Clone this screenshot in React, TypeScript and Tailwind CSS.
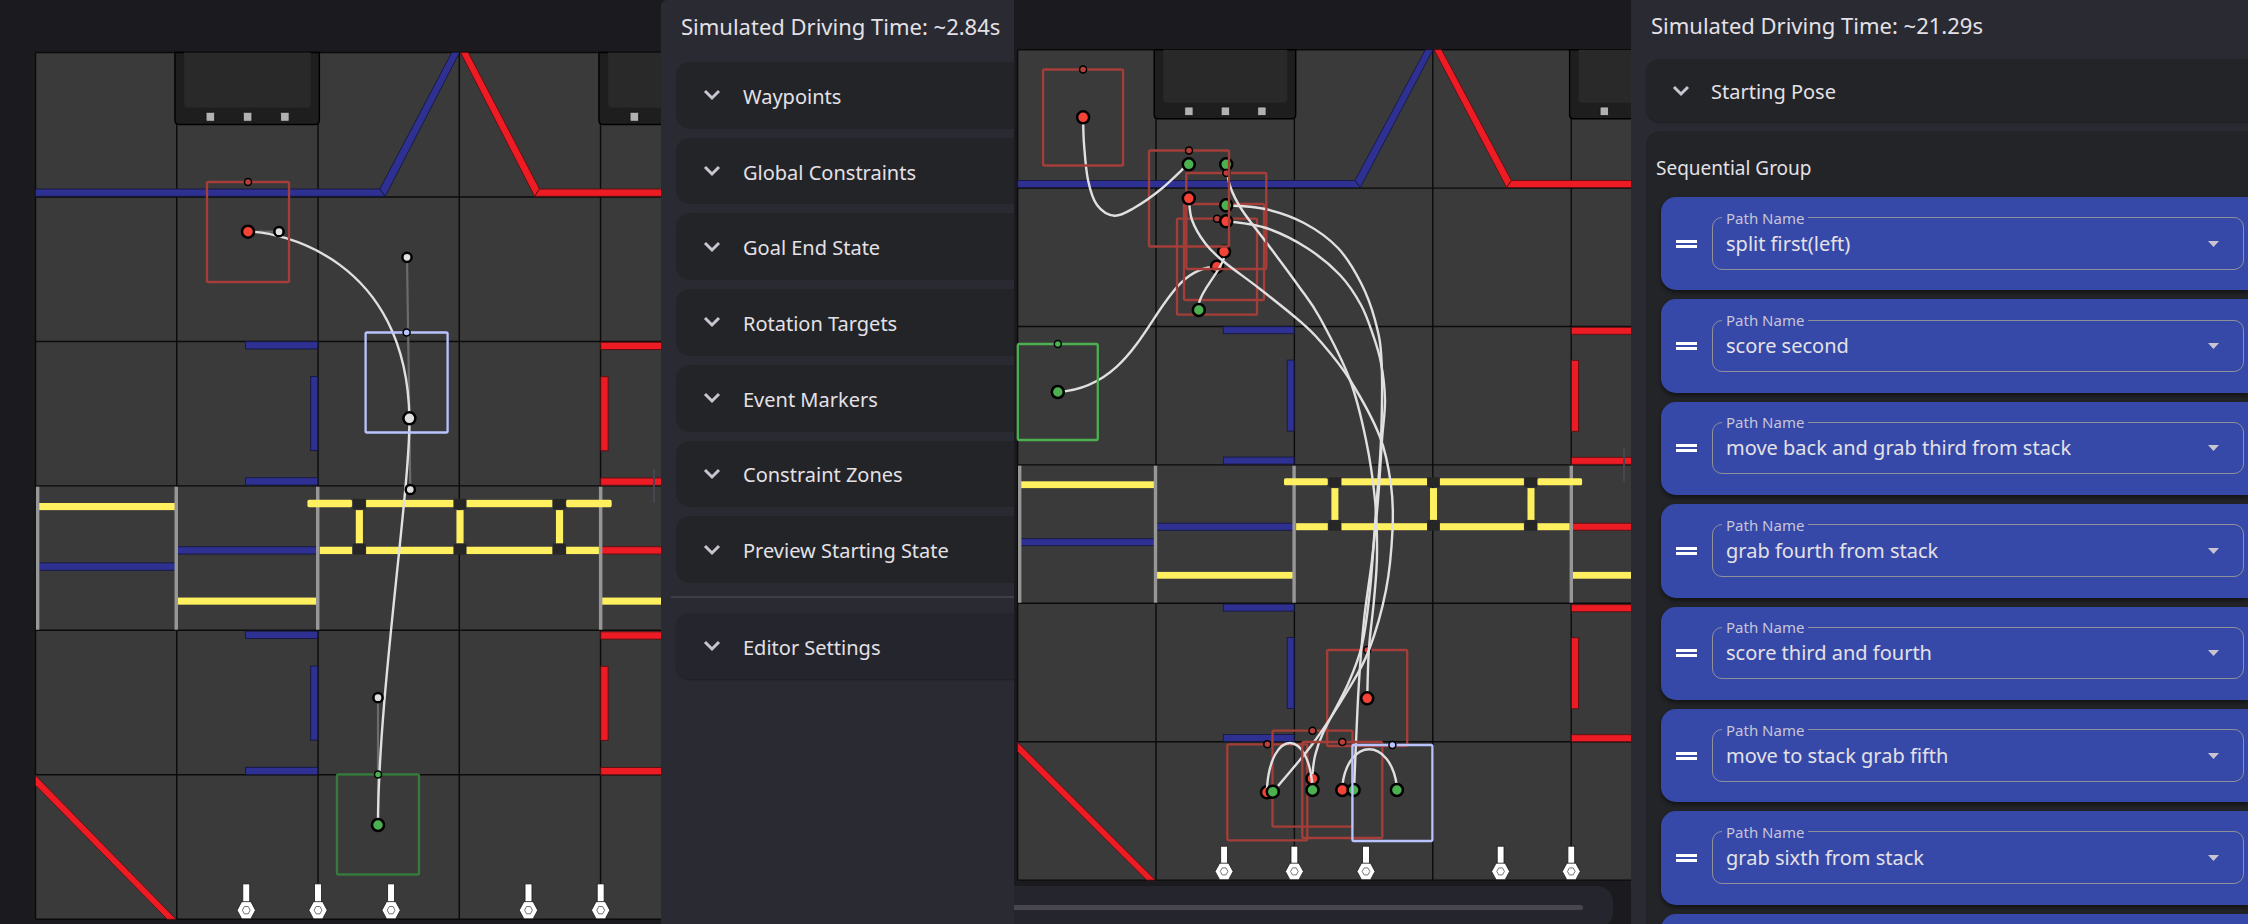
import { useId, type ReactNode } from 'react';

type Point = [number, number];

const RED = '#f44336';
const DIM_RED = '#a53e38';
const GREEN = '#4caf50';
const DIM_GREEN = '#367a3c';
const PREVIEW = '#b9c3ff';
const CELL = 138.4;

/** Smooth cubic path that passes through every given point. */
function through(points: Point[]): string {
  let d = `M${points[0][0]},${points[0][1]}`;
  for (let i = 0; i < points.length - 1; i++) {
    const p0 = points[Math.max(i - 1, 0)];
    const p1 = points[i];
    const p2 = points[i + 1];
    const p3 = points[Math.min(i + 2, points.length - 1)];
    d += ` C${p1[0] + (p2[0] - p0[0]) / 6},${p1[1] + (p2[1] - p0[1]) / 6}`;
    d += ` ${p2[0] - (p3[0] - p1[0]) / 6},${p2[1] - (p3[1] - p1[1]) / 6}`;
    d += ` ${p2[0]},${p2[1]}`;
  }
  return d;
}

function Line({ d }: { d: string }) {
  return <path d={d} fill="none" stroke="#e0e0e0" strokeWidth="2.4" />;
}

function Dot({ x, y, fill, r = 6 }: { x: number; y: number; fill: string; r?: number }) {
  return <circle cx={x} cy={y} r={r} fill={fill} stroke="#000" strokeWidth={r > 4 ? 2.5 : 1.5} />;
}

function Robot({ x, y, color, dot = color, w = 80, h = 96, dx = 0 }: {
  x: number; y: number; color: string; dot?: string; w?: number; h?: number; dx?: number;
}) {
  return (
    <g>
      <rect x={x - w / 2} y={y - h / 2} width={w} height={h} rx="1.5" fill="none" stroke={color} strokeWidth="2.3" />
      <Dot x={x + dx} y={y - h / 2} r={3.5} fill={dot} />
    </g>
  );
}

function Substation({ x }: { x: number }) {
  return (
    <g transform={`translate(${x} 0)`}>
      <path d="M0,0 V65 Q0,69 4,69 H137.5 Q141.5,69 141.5,65 V0 Z" fill="#1e1e1e" stroke="#000" strokeWidth="1.4" />
      <path d="M9,0 V49 Q9,53 13,53 H129 Q133,53 133,49 V0 Z" fill="#292929" />
      {[30.5, 67, 103.5].map((sx) => (
        <rect key={sx} x={sx} y="57.3" width="8.4" height="8.6" rx="1" fill="#b2b2b2" stroke="#111" strokeWidth="0.8" />
      ))}
    </g>
  );
}

function Peg({ x }: { x: number }) {
  return (
    <g transform={`translate(${x} 0)`} fill="#fff" stroke="#1c1c1c" strokeWidth="0.8">
      <rect x="-3.4" y="796.5" width="6.8" height="18" />
      <path d="M-4.5,813.5 H4.5 L9,821.7 L4.5,830 H-4.5 L-9,821.7 Z" />
      <path d="M-1.9,818.2 H1.9 L3.8,821.7 L1.9,825.2 H-1.9 L-3.8,821.7 Z" stroke="#555" />
    </g>
  );
}

function Field() {
  const lines = [0, 1, 2, 3, 4, 5, 6];
  return (
    <g>
      <rect width="1000" height={CELL * 6} fill="#3a3a3b" />
      <g stroke="#0b0b0b" strokeWidth="1.4">
        {lines.map((n) => <path key={`h${n}`} d={`M0,${n * CELL} H1000`} />)}
        {lines.map((n) => <path key={`v${n}`} d={`M${n * CELL},0 V${CELL * 6}`} />)}
      </g>
      <Substation x={136.6} />
      <Substation x={552} />
      <g fill="#2e3192" stroke="#16183f" strokeWidth="0.9">
        <path d="M0,130.8 H337.3 L342.7,137.8 H0 Z" />
        <path d="M337.3,130.8 L407.8,0 H415.4 L342.7,137.8 Z" />
        {[277, 554.4].map((y) => (
          <g key={y}>
            <rect x="205.7" y={y} width="70.8" height="7" />
            <rect x="269.6" y={y + 33.4} width="6.9" height="71" />
            <rect x="205.7" y={y + 130.4} width="70.8" height="7" />
          </g>
        ))}
        <rect x="3" y="489" width="134" height="7" />
        <rect x="139" y="473.5" width="137" height="7" />
      </g>
      <g fill="#ed1c24" stroke="#5a1013" strokeWidth="0.9">
        <path d="M416.4,0 H424 L493.8,130.8 L489,137.8 Z" />
        <path d="M493.8,130.8 H1000 V137.8 H489 Z" />
        {[277.6, 555].map((y) => (
          <g key={y}>
            <rect x="553.8" y={y} width="300" height="7" />
            <rect x="553.8" y={y + 33} width="7.2" height="71" />
            <rect x="553.8" y={y + 130} width="300" height="7" />
          </g>
        ))}
        <rect x="554" y="473.5" width="300" height="7" />
        <path d="M0,692.5 L137.8,830.4 H129 L0,702 Z" />
      </g>
      <g fill="#fff060">
        <rect x="3" y="431.6" width="134" height="6.8" />
        <rect x="139" y="522.2" width="137" height="6.8" />
        <rect x="555" y="522.2" width="300" height="6.8" />
      </g>
      <g fill="#979797">
        {[0.4, 136.2, 274.8, 552].map((x) => <rect key={x} x={x} y="416" width="3.4" height="137" />)}
      </g>
      <g fill="#262626">
        {[311, 409.8, 507].map((x) => (
          <g key={x}>
            <rect x={x} y="427.6" width="12.4" height="10" />
            <rect x={x} y="470.5" width="12.4" height="10.5" />
          </g>
        ))}
      </g>
      <g fill="#fff060">
        <rect x="266.4" y="428.6" width="43.8" height="7" rx="1.5" />
        <rect x="519.9" y="428.6" width="44.6" height="7" rx="1.5" />
        <rect x="323.9" y="428.6" width="85.5" height="7" />
        <rect x="422.3" y="428.6" width="84" height="7" />
        <rect x="278.5" y="473.5" width="31.7" height="7" />
        <rect x="323.9" y="473.5" width="85.5" height="7" />
        <rect x="422.3" y="473.5" width="84" height="7" />
        <rect x="519.9" y="473.5" width="32.1" height="7" />
        {[313.8, 412.4, 509.9].map((x) => <rect key={x} x={x} y="438.4" width="7" height="31.8" />)}
      </g>
      {[206.5, 276.8, 348.4, 483, 553.7].map((x) => <Peg key={x} x={x} />)}
    </g>
  );
}

function PathMap() {
  return (
    <svg className="block h-full w-full" viewBox="0 0 661 924" preserveAspectRatio="xMinYMin slice" role="img" aria-label="Path on field">
      <g transform="translate(35.5 52.5) scale(1.0207 1.0438)"><Field /></g>
      <g stroke="#6b6b6b" strokeWidth="2.2">
        <path d="M248,231.7 H279" />
        <path d="M407,257.3 L409.4,418.3 L410.3,489.3" />
        <path d="M378,825 V697.7" />
      </g>
      <Line d="M248,231.7 C279,231.7 407,257.3 409.4,418.3 C410.3,489.3 378,697.7 378,825" />
      <Robot x={248} y={232} w={82} h={100} color={DIM_RED} dot="#b8403a" />
      <Robot x={378} y={824.5} w={82} h={100} color={DIM_GREEN} dot={GREEN} />
      <Dot x={279} y={231.7} r={4.6} fill="#e0e0e0" />
      <Dot x={407} y={257.3} r={4.6} fill="#e0e0e0" />
      <Dot x={410.3} y={489.5} r={4.6} fill="#e0e0e0" />
      <Dot x={378} y={697.7} r={4.6} fill="#e0e0e0" />
      <Dot x={248} y={231.7} fill={RED} />
      <Dot x={409.4} y={418.3} fill="#e0e0e0" />
      <Dot x={378} y={825} fill={GREEN} />
      <Robot x={406.6} y={382.5} w={82} h={100} color={PREVIEW} />
      <rect x="653" y="469" width="2" height="34" rx="1" fill="#47464f" />
    </svg>
  );
}

function AutoMap() {
  return (
    <svg className="block w-full shrink-0" viewBox="0 0 617 886" role="img" aria-label="Auto on field">
      <g transform="translate(3.6 49.7)"><Field /></g>

      <Line d="M43.8,392 C137,386 139,267 203,266.7" />
      <Robot x={203} y={266.7} color={DIM_RED} dot="#b8403a" />
      <Dot x={203} y={266.7} fill={RED} />
      <Dot x={43.8} y={392} fill={GREEN} />
      <Robot x={43.8} y={392} color={GREEN} />

      <Robot x={210} y={252} color={DIM_RED} dot="#b8403a" />
      <Dot x={210} y={251.7} fill={RED} />
      <Line d="M210,258 C206,272 187,290 184.8,304" />
      <Dot x={184.8} y={310} fill={GREEN} />

      <Robot x={353.2} y={698} color={DIM_RED} dot="#c9453d" />
      <Line d={through([[212.2, 164.3], [216, 186], [228, 210], [255, 246], [284.5, 286], [306, 318], [336, 380], [352, 440], [361, 500], [363, 555], [360, 600], [355, 648], [353.2, 698]])} />
      <Dot x={353.2} y={698.3} fill={RED} />
      <Dot x={212.2} y={164.3} fill={GREEN} />

      <Robot x={253.3} y={792.3} color={DIM_RED} dot="#b8403a" />
      <Robot x={298.5} y={778.7} color={DIM_RED} dot="#b8403a" />
      <Dot x={253} y={792.3} fill={RED} />
      <Dot x={298.5} y={778.7} fill={RED} />
      <Line d={through([[212.2, 205.3], [251, 209], [290, 223], [324, 248], [347, 283], [361, 320], [367.5, 360], [367, 440], [362, 510], [356, 590], [348, 645], [334, 684], [309, 733], [301, 756], [298.5, 774]])} />
      <Line d="M253,788 C257,728 295,728 298.5,788" />
      <Dot x={212.2} y={205.3} fill={GREEN} />

      <Robot x={212.3} y={221} color={DIM_RED} dot="#b8403a" />
      <Line d={through([[212.2, 221], [252, 228], [293, 248], [326, 275], [347, 305], [359, 335], [367, 363], [371, 400], [368, 440], [364, 500], [358, 560], [350, 620], [344.5, 690], [340, 790]])} />
      <Dot x={212.2} y={221.3} fill={RED} />

      <Robot x={175} y={198.5} color={DIM_RED} dot="#b8403a" />
      <Line d={through([[174.8, 198.3], [178, 220], [191, 243], [209, 261], [246, 289], [284.5, 320], [306, 341], [336, 380], [366, 437], [377, 485], [378.5, 530], [372, 590], [355, 650], [334, 690], [300, 742], [264, 786]])} />
      <Dot x={174.8} y={198.3} fill={RED} />
      <Dot x={258.8} y={791.7} fill={GREEN} />
      <Dot x={298.5} y={790} fill={GREEN} />

      <Line d={through([[69.1, 117.5], [70, 144], [74, 180], [83, 205], [100.5, 215.7], [120, 208], [146, 190], [172, 166]])} />
      <Robot x={69.1} y={117.5} color={DIM_RED} dot="#b8403a" />
      <Dot x={69.1} y={117.3} fill={RED} />
      <Dot x={174.8} y={164.3} fill={GREEN} />

      <Robot x={328.3} y={790} color={DIM_RED} dot="#b8403a" />
      <Line d="M328.3,786 C334,737 376,737 382.9,786" />
      <Dot x={328.3} y={790} fill={RED} />
      <Dot x={339.6} y={790} fill={GREEN} />
      <Dot x={382.9} y={790} fill={GREEN} />
      <Robot x={378.4} y={793} color={PREVIEW} />
      <rect x="609" y="448" width="2" height="34" rx="1" fill="#47464f" />
    </svg>
  );
}

function Chevron() {
  return (
    <svg className="h-6 w-6 shrink-0" viewBox="0 0 24 24" fill="none" stroke="#c8c5d0" strokeWidth="3" aria-hidden="true">
      <path d="M5 8 L12 15 L19 8" />
    </svg>
  );
}

function Section({ title, className = '' }: { title: string; className?: string }) {
  return (
    <button type="button" className={`flex w-full items-center rounded-l-[14px] text-left text-[20px] text-[#e4e1e6] ${className}`}>
      <Chevron />
      <span className="pt-[3px]">{title}</span>
    </button>
  );
}

const SECTIONS = [
  'Waypoints', 'Global Constraints', 'Goal End State', 'Rotation Targets',
  'Event Markers', 'Constraint Zones', 'Preview Starting State',
];

const PATHS = [
  'split first(left)', 'score second', 'move back and grab third from stack', 'grab fourth from stack',
  'score third and fourth', 'move to stack grab fifth', 'grab sixth from stack',
];

function Card({ children }: { children?: ReactNode }) {
  return (
    <li className="flex items-center gap-[15px] rounded-l-[15px] bg-[#3649a8] pr-1 pl-[15px] shadow-[0_3px_4px_rgba(0,0,0,0.45)]">
      {children}
    </li>
  );
}

function PathCard({ name }: { name: string }) {
  const id = useId();
  return (
    <Card>
      <svg className="h-2 w-[21px] shrink-0" viewBox="0 0 21 8" fill="#fff" aria-hidden="true">
        <path d="M0 0H21V3H0ZM0 5H21V8H0Z" />
      </svg>
      <fieldset className="relative mb-[10px] h-[62px] min-w-0 flex-1 rounded-[10px] border border-[#90909a]">
        <legend className="ml-[9px] px-1 text-[15px] leading-[20px] text-[#c6c5d9]">
          <label htmlFor={id}>Path Name</label>
        </legend>
        <select id={id} defaultValue={name} className="block h-8 w-full appearance-none bg-transparent px-[13px] text-[20px] leading-8 text-[#e4e1e6] outline-none">
          <option>{name}</option>
        </select>
        <svg className="pointer-events-none absolute right-6 bottom-[22px] h-[6px] w-[11px]" viewBox="0 0 11 6" fill="#c8c5d0" aria-hidden="true">
          <path d="M0 0H11L5.5 6Z" />
        </svg>
      </fieldset>
    </Card>
  );
}

export default function App() {
  return (
    <main className="grid h-screen grid-cols-[661fr_353fr_617fr_617fr] overflow-hidden bg-[#1b1b1f] font-['Noto_Sans','Open_Sans',sans-serif]">
      <div className="min-h-0 overflow-hidden"><PathMap /></div>

      <aside className="overflow-hidden rounded-tl-md bg-[#2a2a33]">
        <h1 className="pt-[11px] pl-5 text-[22px] leading-[30px] whitespace-nowrap text-[#e4e1e6]">Simulated Driving Time: ~2.84s</h1>
        <div className="mt-[21px] ml-[15px] grid h-[521px] auto-rows-fr gap-[9px]">
          {SECTIONS.map((title) => <Section key={title} title={title} className="gap-[19px] bg-[#232428] pl-6" />)}
        </div>
        <hr className="mt-[13px] ml-[10px] border-t-2 border-[#3f3e48]" />
        <div className="mt-[15px] ml-[15px] grid h-[66px]">
          <Section title="Editor Settings" className="gap-[19px] bg-[#25252d] pl-6 shadow-[0_1px_2px_rgba(0,0,0,0.3)]" />
        </div>
      </aside>

      <div className="flex min-h-0 flex-col overflow-hidden">
        <AutoMap />
        <div className="mr-[18px] flex h-[42px] shrink-0 items-center rounded-r-2xl bg-[#25252d] pr-[30px]">
          <input
            type="range"
            aria-label="Preview time"
            defaultValue={0}
            className="h-[5px] w-full appearance-none rounded-r-full bg-[#47464f] [&::-webkit-slider-thumb]:appearance-none"
          />
        </div>
      </div>

      <aside className="overflow-hidden bg-[#2a2a33]">
        <h1 className="pt-[10px] pl-5 text-[22px] leading-[30px] whitespace-nowrap text-[#e4e1e6]">Simulated Driving Time: ~21.29s</h1>
        <div className="mt-[19px] ml-[15px] grid h-[63px]">
          <Section title="Starting Pose" className="gap-[18px] bg-[#232428] pl-[23px] shadow-[0_1px_2px_rgba(0,0,0,0.3)]" />
        </div>
        <section className="mt-[9px] ml-[15px] rounded-tl-[14px] bg-[#232428] pt-[23px]">
          <h2 className="pl-[10px] text-[19px] leading-[28px] text-[#e4e1e6]">Sequential Group</h2>
          <ul className="mt-[15px] ml-[15px] grid h-[810px] auto-rows-fr gap-[9px]">
            {PATHS.map((name) => <PathCard key={name} name={name} />)}
            <Card />
          </ul>
        </section>
      </aside>
    </main>
  );
}
